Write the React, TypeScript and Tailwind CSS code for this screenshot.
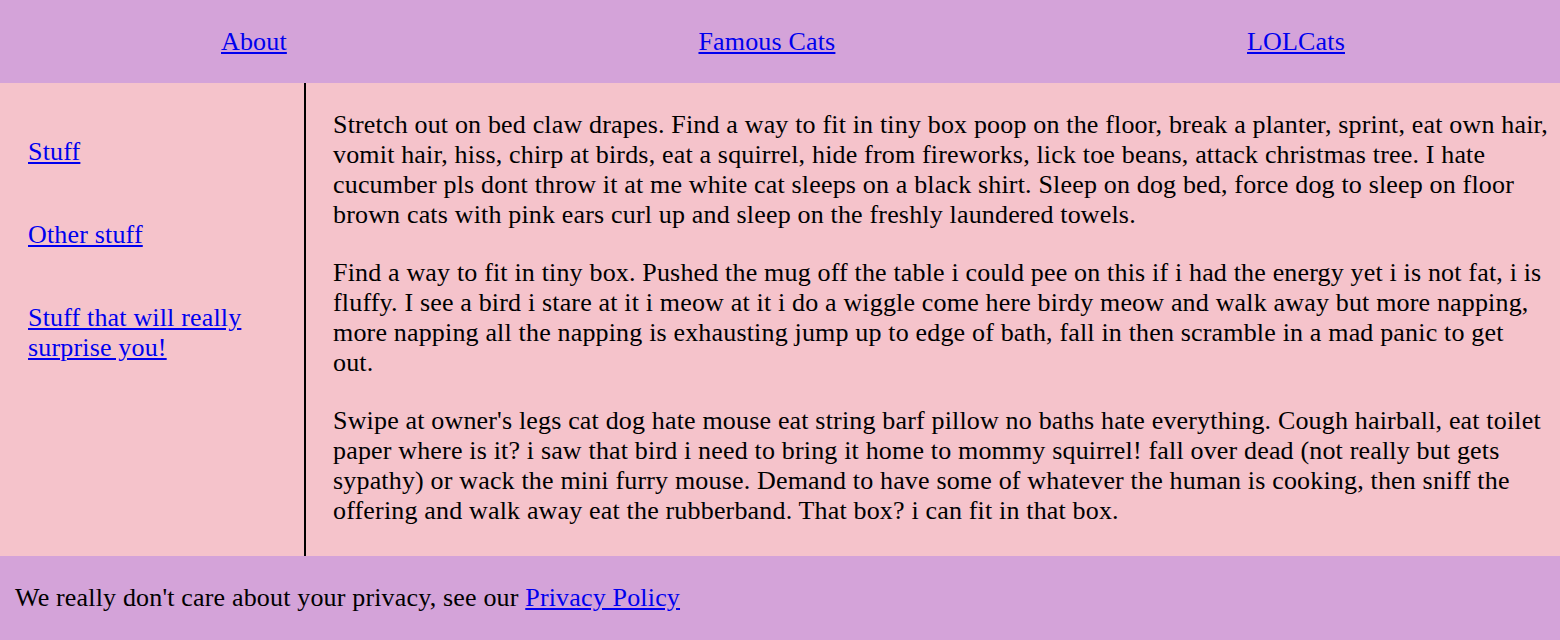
const NAV = ["About", "Famous Cats", "LOLCats"];
const SIDE = ["Stuff", "Other stuff", "Stuff that will really surprise you!"];

const PARAS = [
  "Stretch out on bed claw drapes. Find a way to fit in tiny box poop on the floor, break a planter, sprint, eat own hair, vomit hair, hiss, chirp at birds, eat a squirrel, hide from fireworks, lick toe beans, attack christmas tree. I hate cucumber pls dont throw it at me white cat sleeps on a black shirt. Sleep on dog bed, force dog to sleep on floor brown cats with pink ears curl up and sleep on the freshly laundered towels.",
  "Find a way to fit in tiny box. Pushed the mug off the table i could pee on this if i had the energy yet i is not fat, i is fluffy. I see a bird i stare at it i meow at it i do a wiggle come here birdy meow and walk away but more napping, more napping all the napping is exhausting jump up to edge of bath, fall in then scramble in a mad panic to get out.",
  "Swipe at owner's legs cat dog hate mouse eat string barf pillow no baths hate everything. Cough hairball, eat toilet paper where is it? i saw that bird i need to bring it home to mommy squirrel! fall over dead (not really but gets sypathy) or wack the mini furry mouse. Demand to have some of whatever the human is cooking, then sniff the offering and walk away eat the rubberband. That box? i can fit in that box.",
];

export default function App() {
  return (
    <div className="flex h-[640px] w-[1560px] flex-col overflow-hidden font-['Liberation_Serif','Times_New_Roman',serif] text-[26px] leading-[30px] tracking-[0.17px] text-black">
      <header className="flex h-[83px] shrink-0 items-center justify-between bg-[#d4a3d9] pl-[221px] pr-[215px]">
        {NAV.map((item) => (
          <a key={item} href="#" className="text-[#0000ee] underline">
            {item}
          </a>
        ))}
      </header>

      <div className="flex flex-1 bg-[#f5c3cb]">
        <nav className="flex w-[306px] shrink-0 flex-col gap-[53px] border-r-2 border-black pl-[28px] pr-[40px] pt-[54px]">
          {SIDE.map((item) => (
            <a key={item} href="#" className="text-[#0000ee] underline">
              {item}
            </a>
          ))}
        </nav>
        <main className="flex flex-1 flex-col gap-[28px] pl-[27px] pr-[12px] pt-[27px]">
          {PARAS.map((p, i) => (
            <p key={i}>{p}</p>
          ))}
        </main>
      </div>

      <footer className="flex h-[84px] shrink-0 items-center bg-[#d4a3d9] px-[15px]">
        <p>
          We really don't care about your privacy, see our{" "}
          <a href="#" className="text-[#0000ee] underline">
            Privacy Policy
          </a>
        </p>
      </footer>
    </div>
  );
}
